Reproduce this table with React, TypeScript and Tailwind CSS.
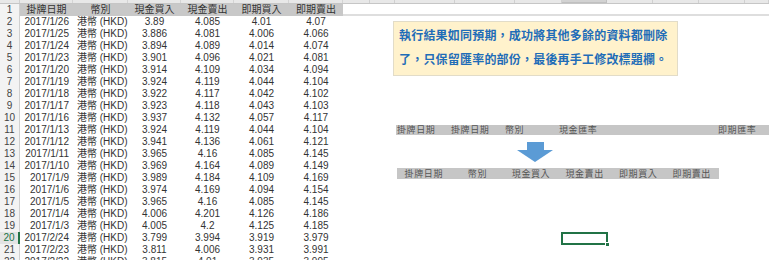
import React from "react";

const rows = [
  ["2017/1/26", "3.89", "4.085", "4.01", "4.07"],
  ["2017/1/25", "3.886", "4.081", "4.006", "4.066"],
  ["2017/1/24", "3.894", "4.089", "4.014", "4.074"],
  ["2017/1/23", "3.901", "4.096", "4.021", "4.081"],
  ["2017/1/20", "3.914", "4.109", "4.034", "4.094"],
  ["2017/1/19", "3.924", "4.119", "4.044", "4.104"],
  ["2017/1/18", "3.922", "4.117", "4.042", "4.102"],
  ["2017/1/17", "3.923", "4.118", "4.043", "4.103"],
  ["2017/1/16", "3.937", "4.132", "4.057", "4.117"],
  ["2017/1/13", "3.924", "4.119", "4.044", "4.104"],
  ["2017/1/12", "3.941", "4.136", "4.061", "4.121"],
  ["2017/1/11", "3.965", "4.16", "4.085", "4.145"],
  ["2017/1/10", "3.969", "4.164", "4.089", "4.149"],
  ["2017/1/9", "3.989", "4.184", "4.109", "4.169"],
  ["2017/1/6", "3.974", "4.169", "4.094", "4.154"],
  ["2017/1/5", "3.965", "4.16", "4.085", "4.145"],
  ["2017/1/4", "4.006", "4.201", "4.126", "4.186"],
  ["2017/1/3", "4.005", "4.2", "4.125", "4.185"],
  ["2017/2/24", "3.799", "3.994", "3.919", "3.979"],
  ["2017/2/23", "3.811", "4.006", "3.931", "3.991"],
  ["2017/2/22", "3.815", "4.01", "3.935", "3.995"],
];

const font = { fontFamily: '"Liberation Sans", "Noto Sans CJK TC", sans-serif' };

const leftCols = ["w-[53px]", "w-[55px]", "w-[53px]", "w-[53px]", "w-[55px]", "w-[54px]"];
const rightCols = ["w-[27px]", "w-[25px]", "w-[60px]", "w-[60px]", "w-[47px]", "w-[45px]", "w-[46px]", "w-[46px]", "w-[46px]", "w-[24px]"];
const headers = ["掛牌日期", "幣別", "現金買入", "現金賣出", "即期買入", "即期賣出"];

const Sheet = () => (
  <div className="w-[343px] shrink-0 text-[10px] text-[#333]">
    <div className="flex h-[4px] bg-[#e8e8e8] border-b border-[#c6c6c6]">
      <div className="w-[20px] border-r border-[#cfcfcf]" />
      {leftCols.map((w, i) => (
        <div key={i} className={`${w} border-r border-[#d4d4d4]`} />
      ))}
    </div>
    <div className="flex h-[12px] leading-[12px]">
      <div className="w-[20px] bg-[#f3f3f3] border-r border-[#d0d0d0] text-center text-[#444]">1</div>
      <div className="flex bg-[#c8c8c8]">
        {headers.map((h, i) => (
          <div key={i} className={`${leftCols[i]} text-center`}>{h}</div>
        ))}
      </div>
    </div>
    {rows.map((r, i) => {
      const sel = i + 2 === 20;
      return (
        <div key={i} className="flex h-[12px] leading-[12px]">
          <div
            className={
              sel
                ? "w-[20px] bg-[#e3e3e3] border-r-2 border-[#217346] text-center text-[#217346]"
                : "w-[20px] bg-[#f3f3f3] border-r border-[#d0d0d0] text-center text-[#444]"
            }
          >
            {i + 2}
          </div>
          <div className={`${leftCols[0]} text-right pr-[4px]`}>{r[0]}</div>
          <div className={`${leftCols[1]} pl-[4px]`}>港幣 (HKD)</div>
          <div className={`${leftCols[2]} text-center`}>{r[1]}</div>
          <div className={`${leftCols[3]} text-center`}>{r[2]}</div>
          <div className={`${leftCols[4]} text-center`}>{r[3]}</div>
          <div className={`${leftCols[5]} text-center`}>{r[4]}</div>
        </div>
      );
    })}
  </div>
);

const Notes = () => (
  <div className="flex-1 flex flex-col overflow-hidden">
    <div className="flex h-[4px] bg-[#e8e8e8] border-b border-[#c6c6c6] shrink-0">
      {rightCols.map((w, i) => (
        <div
          key={i}
          className={i === 5 ? `${w} shrink-0 bg-[#d2d2d2] border-b border-[#217346] border-r border-[#c0c0c0]` : `${w} shrink-0 border-r border-[#d0d0d0]`}
        />
      ))}
    </div>
    <div className="mt-[10px] h-[2px] bg-[#dedede] shrink-0" />
    <div
      className="ml-[50px] mt-[5px] w-[285px] h-[55px] shrink-0 bg-[#fff2cc] border border-[#e2dcc8] px-[5px] pt-[1px] text-[12px] leading-[24px] font-semibold tracking-[0.2px] text-[#1f6db8]"
      style={{ fontFamily: '"Noto Sans CJK TC", sans-serif' }}
    >
      <div>執行結果如同預期，成功將其他多餘的資料都刪除</div>
      <div>了，只保留匯率的部份，最後再手工修改標題欄。</div>
    </div>
    <div
      className="ml-[53px] mt-[49px] h-[10px] shrink-0 bg-[#c6c6c6] flex items-center text-[9px] leading-[10px] tracking-[0.6px] text-[#555]"
      style={{ fontFamily: '"Noto Sans CJK TC", sans-serif' }}
    >
      <span className="w-[55px] pl-[1px] shrink-0">掛牌日期</span>
      <span className="w-[54px] shrink-0">掛牌日期</span>
      <span className="w-[54px] shrink-0">幣別</span>
      <span className="w-[159px] shrink-0">現金匯率</span>
      <span className="shrink-0">即期匯率</span>
    </div>
    <div className="ml-[174px] mt-[7px] shrink-0">
      <svg width="36" height="20" viewBox="0 0 36 20">
        <path d="M10 0 H27 V8 H36 L18 20 L0 8 H10 Z" fill="#5b9bd5" />
      </svg>
    </div>
    <div
      className="ml-[54px] mt-[6px] w-[322px] h-[11px] shrink-0 bg-[#c6c6c6] flex items-center text-[9px] leading-[11px] tracking-[0.6px] text-[#555]"
      style={{ fontFamily: '"Noto Sans CJK TC", sans-serif' }}
    >
      {headers.map((h, i) => (
        <span key={i} className="w-[53.6px] shrink-0 text-center">{h}</span>
      ))}
    </div>
    <div className="relative ml-[218px] mt-[53px] w-[47px] h-[13px] shrink-0 border-2 border-[#217346]">
      <div className="absolute -right-[4px] -bottom-[4px] w-[5px] h-[5px] bg-[#217346] border border-white" />
    </div>
  </div>
);

export default function App() {
  return (
    <div className="w-[769px] h-[260px] overflow-hidden bg-white flex" style={font}>
      <Sheet />
      <Notes />
    </div>
  );
}
